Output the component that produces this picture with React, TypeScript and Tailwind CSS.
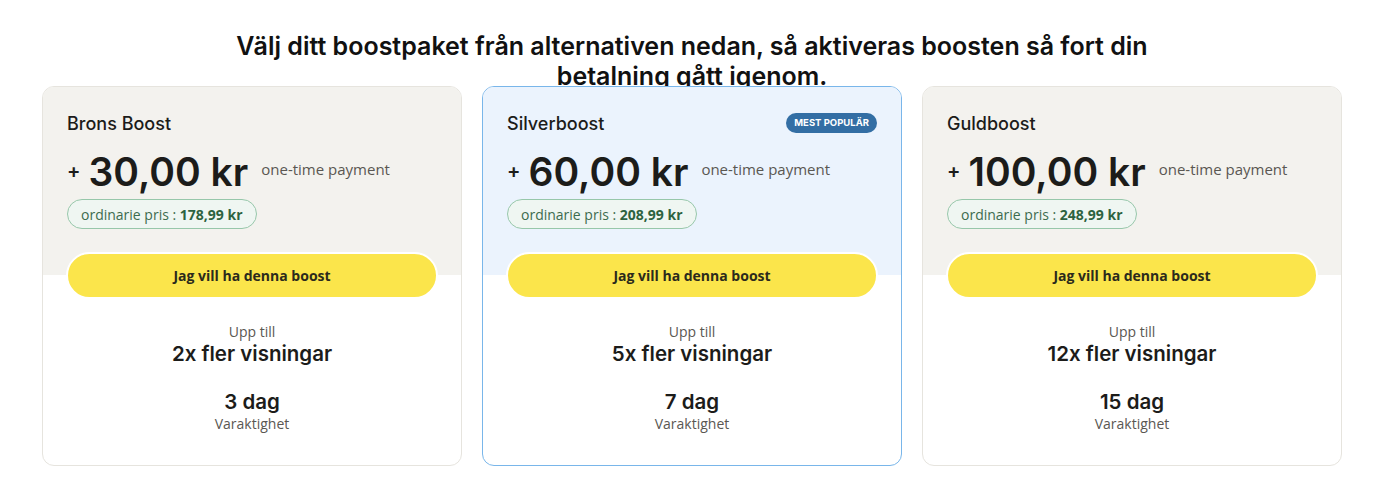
import React from 'react';

interface Plan {
    name: string;
    price: string;
    ordinary: string;
    views: string;
    days: string;
    popular?: boolean;
}

const plans: Plan[] = [
    { name: 'Brons Boost', price: '30,00 kr', ordinary: '178,99 kr', views: '2x fler visningar', days: '3 dag' },
    { name: 'Silverboost', price: '60,00 kr', ordinary: '208,99 kr', views: '5x fler visningar', days: '7 dag', popular: true },
    { name: 'Guldboost', price: '100,00 kr', ordinary: '248,99 kr', views: '12x fler visningar', days: '15 dag' }
];

function PlanCard({ plan }: { plan: Plan }) {
    return (
        <div
            className={`relative flex h-[380px] flex-col overflow-hidden rounded-xl border bg-white ${
                plan.popular ? 'border-[#79b6ea]' : 'border-[#e6e4de]'
            }`}
        >
            <div className={`px-6 pt-[23px] pb-[46px] ${plan.popular ? 'bg-[#ebf3fd]' : 'bg-[#f3f2ee]'}`}>
                <div className="flex h-[26px] items-center justify-between">
                    <span className="font-['Inter',sans-serif] text-[18px] font-medium text-[#1c1c1a]">{plan.name}</span>
                    {plan.popular && (
                        <span className="rounded-full bg-[#336ea4] px-[8px] py-[3px] font-['Inter',sans-serif] text-[9.5px] font-bold uppercase leading-[14px] text-white">
                            Mest populär
                        </span>
                    )}
                </div>
                <div className="mt-[15px] flex h-[40px] items-center font-['Inter',sans-serif] text-[#1c1c1a]">
                    <span className="mr-[8px] text-[20px] font-semibold">+</span>
                    <span className="text-[39px] font-semibold leading-none">{plan.price}</span>
                    <span className="mb-[4px] ml-[13px] font-['Open_Sans',sans-serif] text-[15px] text-[#5a5752]">
                        one-time payment
                    </span>
                </div>
                <div className="mt-[8px] flex">
                    <span className="flex h-[30px] items-center rounded-full border border-[#97c7aa] bg-[#eff6f2] px-[13px] font-['Open_Sans',sans-serif] text-[14px] text-[#3d6b4e]">
                        ordinarie pris :&nbsp;<b className="font-bold text-[#2d6240]">{plan.ordinary}</b>
                    </span>
                </div>
            </div>
            <div className="relative -mt-[23px] px-[23px]">
                <button className="h-[47px] w-full rounded-full border-2 border-white bg-[#fbe54b] font-['Open_Sans',sans-serif] text-[14px] font-bold text-[#2b2a1c]">
                    Jag vill ha denna boost
                </button>
            </div>
            <div className="mt-[24px] flex flex-col items-center text-center">
                <span className="font-['Open_Sans',sans-serif] text-[14px] leading-[18px] text-[#5a5752]">Upp till</span>
                <span className="font-['Inter',sans-serif] text-[20.5px] font-semibold leading-[26px] text-[#1c1c1a]">
                    {plan.views}
                </span>
                <span className="mt-[22px] font-['Inter',sans-serif] text-[20.5px] font-semibold leading-[26px] text-[#1c1c1a]">
                    {plan.days}
                </span>
                <span className="font-['Open_Sans',sans-serif] text-[14px] leading-[18px] text-[#5a5752]">Varaktighet</span>
            </div>
        </div>
    );
}

export default function App() {
    return (
        <div className="min-h-[502px] bg-white">
            <div className="h-[86px] pt-[31px]">
                <h1 className="mx-auto max-w-[940px] text-center font-['Inter',sans-serif] text-[25px] font-semibold leading-[30px] text-[#111]">
                    Välj ditt boostpaket från alternativen nedan, så aktiveras boosten så fort din betalning gått igenom.
                </h1>
            </div>
            <div className="relative mx-auto grid w-[1300px] grid-cols-3 gap-5">
                {plans.map((p) => (
                    <PlanCard key={p.name} plan={p} />
                ))}
            </div>
        </div>
    );
}
